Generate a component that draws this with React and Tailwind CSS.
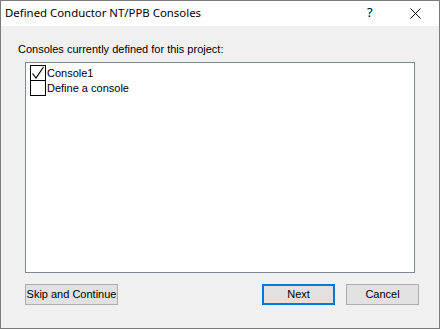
import React from "react";

const ui = { fontFamily: '"Liberation Sans", Arial, sans-serif' };
const title = { fontFamily: '"Noto Sans", "Liberation Sans", sans-serif' };

function Check({ checked }) {
  return (
    <div className="w-[16px] h-[16px] border border-black bg-white flex items-center justify-center">
      {checked && (
        <svg width="14" height="14" viewBox="0 0 14 14">
          <path d="M1.5 7.5 L5 12 L12.5 1" fill="none" stroke="black" strokeWidth="1.2" />
        </svg>
      )}
    </div>
  );
}

export default function App() {
  return (
    <div className="w-[440px] h-[329px] border border-[#7a7a7a] bg-[#f0f0f0] flex flex-col overflow-hidden">
      <div className="h-[25px] bg-white flex items-center relative" style={title}>
        <span className="pl-[4px] text-[11.4px] text-black leading-none -mt-[1px]">Defined Conductor NT/PPB Consoles</span>
        <span className="absolute left-[366px] top-[5px] text-[13px] leading-none text-black">?</span>
        <svg className="absolute left-[409px] top-[7px]" width="11" height="11" viewBox="0 0 11 11">
          <path d="M0.5 0.5 L10.5 10.5 M10.5 0.5 L0.5 10.5" stroke="black" strokeWidth="1" />
        </svg>
      </div>
      <div className="flex flex-col flex-1" style={ui}>
        <div className="mt-[17px] pl-[17px] text-[11px] leading-[13px] text-black">
          Consoles currently defined for this project:
        </div>
        <div className="ml-[24px] mt-[6px] w-[390px] h-[211px] bg-white border border-[#828790] pl-[4px] pt-[2px]">
          <div className="flex items-center h-[16px]">
            <Check checked />
            <span className="ml-[1px] text-[11px] text-black">Console1</span>
          </div>
          <div className="flex items-center h-[16px] -mt-[1px]">
            <Check />
            <span className="ml-[1px] text-[11px] text-black">Define a console</span>
          </div>
        </div>
        <div className="mt-[11px] flex pl-[24px]">
          <div className="w-[93px] h-[21px] bg-[#e1e1e1] border border-[#adadad] flex items-center justify-center text-[11px] text-black">
            Skip and Continue
          </div>
          <div className="ml-[144px] w-[73px] h-[21px] bg-[#e1e1e1] border-2 border-[#0078d7] flex items-center justify-center text-[11px] text-black">
            Next
          </div>
          <div className="ml-[11px] w-[73px] h-[21px] bg-[#e1e1e1] border border-[#adadad] flex items-center justify-center text-[11px] text-black">
            Cancel
          </div>
        </div>
      </div>
    </div>
  );
}
